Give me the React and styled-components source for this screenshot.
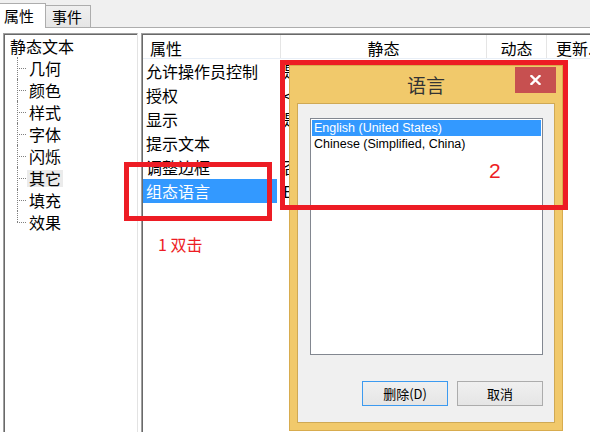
import React from 'react';
import styled, { createGlobalStyle, css } from 'styled-components';

const CJK = `"Noto Sans CJK SC", "Noto Sans", sans-serif`;
const UI = `"Liberation Sans", "Noto Sans CJK SC", sans-serif`;
const RED = '#ed1c24';
const COLS = '138px 206px 60px 1fr';

const GlobalStyle = createGlobalStyle`
  html, body {
    margin: 0;
    padding: 0;
  }
  body {
    width: 590px;
    height: 432px;
    overflow: hidden;
    background: #fff;
    font-family: ${CJK};
    color: #000;
  }
`;

const tree = [
  { label: '静态文本', children: ['几何', '颜色', '样式', '字体', '闪烁', '其它', '填充', '效果'] },
];

const rows = [
  { name: '允许操作员控制', value: '是' },
  { name: '授权', value: '<无>' },
  { name: '显示', value: '是' },
  { name: '提示文本', value: '' },
  { name: '调整边框', value: '否' },
  { name: '组态语言', value: 'English (United States)', selected: true },
];

const languages = ['English (United States)', 'Chinese (Simplified, China)'];

const App = () => {
  return (
    <Page>
      <GlobalStyle />
      <TabStrip>
        <Tab $active>属性</Tab>
        <Tab>事件</Tab>
      </TabStrip>
      <TabPage>
        <TreePanel>
          {tree.map((node) => (
            <div key={node.label}>
              <TreeRow>{node.label}</TreeRow>
              <ChildList>
                {node.children.map((child) => (
                  <ChildItem key={child}>
                    <ChildLabel $current={child === '其它'}>{child}</ChildLabel>
                  </ChildItem>
                ))}
              </ChildList>
            </div>
          ))}
        </TreePanel>
        <GridPanel>
          <HeaderRow>
            <HeaderCell>属性</HeaderCell>
            <HeaderCell $center>静态</HeaderCell>
            <HeaderCell $center>动态</HeaderCell>
            <HeaderCell $last>更新.</HeaderCell>
          </HeaderRow>
          {rows.map((row) => (
            <GridRow key={row.name}>
              <NameCell $selected={row.selected}>{row.name}</NameCell>
              <ValueCell>{row.value}</ValueCell>
              <ValueCell />
              <ValueCell />
            </GridRow>
          ))}
        </GridPanel>
      </TabPage>

      <Dialog>
        <TitleBar>
          语言
          <CloseButton>
            <svg width="11" height="10" viewBox="0 0 11 10">
              <path d="M1.5 1 L9.5 9 M9.5 1 L1.5 9" stroke="#fff" strokeWidth="2.4" strokeLinecap="square" />
            </svg>
          </CloseButton>
        </TitleBar>
        <Client>
          <ListBox>
            {languages.map((lang, index) => (
              <ListItem key={lang} $selected={index === 0}>{lang}</ListItem>
            ))}
          </ListBox>
          <ButtonRow>
            <DialogButton $default>删除(D)</DialogButton>
            <DialogButton>取消</DialogButton>
          </ButtonRow>
        </Client>
      </Dialog>

      <MarkBox $left={124} $top={162} $width={148} $height={59} />
      <MarkBox $left={280} $top={60} $width={288} $height={150} />
      <MarkLabel $left={158} $top={236} $size={16}>1 双击</MarkLabel>
      <MarkLabel $left={489} $top={160} $size={21} $latin>2</MarkLabel>
    </Page>
  );
};

export default App;

const Page = styled.div`
  position: relative;
  width: 590px;
  height: 432px;
  display: flex;
  flex-direction: column;
  overflow: hidden;
`;

const TabStrip = styled.div`
  height: 28px;
  box-sizing: border-box;
  display: flex;
  align-items: flex-end;
  background: #f0f0f0;
  border-bottom: 1px solid #adadad;
`;

const Tab = styled.div`
  box-sizing: border-box;
  font-size: 15px;
  border: 1px solid #adadad;
  border-bottom: none;
  ${(p) =>
    p.$active
      ? css`
          width: 46px;
          height: 25px;
          margin-bottom: -1px;
          background: #fff;
          border-left: none;
          padding-left: 4px;
          line-height: 23px;
          position: relative;
        `
      : css`
          width: 45px;
          height: 22px;
          background: linear-gradient(#f0f0f0, #e5e5e5);
          border-left: none;
          padding-left: 6px;
          line-height: 21px;
        `}
`;

const TabPage = styled.div`
  flex: 1;
  min-height: 0;
  display: flex;
  gap: 3px;
  padding: 5px 0 0 3px;
  background: #fff;
`;

const sunken = css`
  box-sizing: border-box;
  border-left: 1px solid #a0a0a0;
  border-top: 1px solid #a0a0a0;
  box-shadow: inset 1px 1px 0 #696969;
  background: #fff;
`;

const TreePanel = styled.div`
  ${sunken};
  width: 135px;
  border-right: 1px solid #e3e3e3;
  padding: 1px 0 0 6px;
  font-size: 16px;
  line-height: 22px;
`;

const TreeRow = styled.div`
  height: 22px;
  white-space: nowrap;
`;

const ChildList = styled.div`
  margin-left: 7px;
`;

const ChildItem = styled.div`
  position: relative;
  height: 22px;
  padding-left: 11px;
  white-space: nowrap;

  &::before {
    content: '';
    position: absolute;
    left: 0;
    top: 11px;
    width: 9px;
    border-top: 1px dotted #808080;
  }

  &::after {
    content: '';
    position: absolute;
    left: 0;
    top: 0;
    height: 100%;
    border-left: 1px dotted #808080;
  }

  &:last-child::after {
    height: 11px;
  }
`;

const ChildLabel = styled.span`
  display: inline-block;
  line-height: 17px;
  margin-left: -1px;
  padding: 0 2px;
  background: ${(p) => (p.$current ? '#ebebeb' : 'transparent')};
`;

const GridPanel = styled.div`
  ${sunken};
  flex: 1;
  min-width: 0;
  display: flex;
  flex-direction: column;
  padding-left: 1px;
  padding-top: 1px;
`;

const HeaderRow = styled.div`
  display: grid;
  grid-template-columns: ${COLS};
  height: 24px;
  box-sizing: border-box;
  border-bottom: 1px solid #e8eef6;
`;

const HeaderCell = styled.div`
  font-size: 16px;
  line-height: 20px;
  padding: 3px ${(p) => (p.$last ? '9px' : '7px')} 0;
  text-align: ${(p) => (p.$center ? 'center' : 'left')};
  border-right: ${(p) => (p.$last ? 'none' : '1px solid #e5e5e5')};
  white-space: nowrap;
`;

const GridRow = styled.div`
  display: grid;
  grid-template-columns: ${COLS};
  height: 24px;
`;

const NameCell = styled.div`
  font-size: 16px;
  line-height: 24px;
  padding-left: 3px;
  white-space: nowrap;
  overflow: hidden;
  ${(p) =>
    p.$selected &&
    css`
      background: #3399ff;
      color: #fff;
      box-shadow: inset -4px 0 0 #fff;
    `}
`;

const ValueCell = styled.div`
  font-size: 16px;
  line-height: 24px;
  padding-left: 2px;
  white-space: nowrap;
  overflow: hidden;
`;

const Dialog = styled.div`
  position: absolute;
  left: 289px;
  top: 65px;
  width: 274px;
  height: 366px;
  box-sizing: border-box;
  background: #f1c96b;
  border: 1px solid #d8ac4e;
  padding: 0 7px 7px;
  display: flex;
  flex-direction: column;
`;

const TitleBar = styled.div`
  position: relative;
  height: 37px;
  display: flex;
  align-items: center;
  justify-content: center;
  font-size: 19px;
  color: #333;
`;

const CloseButton = styled.div`
  position: absolute;
  right: -1px;
  top: 1px;
  width: 41px;
  height: 26px;
  background: #c75050;
  display: flex;
  align-items: center;
  justify-content: center;
`;

const Client = styled.div`
  flex: 1;
  background: #f0f0f0;
  border: 1px solid #cfa955;
  padding: 14px 11px 0 12px;
`;

const ListBox = styled.div`
  height: 237px;
  box-sizing: border-box;
  border: 1px solid #828790;
  background: #fff;
  padding: 1px;
`;

const ListItem = styled.div`
  height: 16px;
  line-height: 16px;
  padding-left: 2px;
  font-family: ${UI};
  font-size: 12.5px;
  white-space: nowrap;
  background: ${(p) => (p.$selected ? '#3399ff' : 'transparent')};
  color: ${(p) => (p.$selected ? '#fff' : '#000')};
`;

const ButtonRow = styled.div`
  display: flex;
  justify-content: flex-end;
  gap: 9px;
  margin-top: 26px;
`;

const DialogButton = styled.div`
  width: 86px;
  height: 25px;
  box-sizing: border-box;
  border: 1px solid ${(p) => (p.$default ? '#3c9af0' : '#acacac')};
  background: linear-gradient(#f0f0f0, #e5e5e5);
  font-size: 13px;
  line-height: 23px;
  text-align: center;
`;

const MarkBox = styled.div`
  position: absolute;
  left: ${(p) => p.$left}px;
  top: ${(p) => p.$top}px;
  width: ${(p) => p.$width}px;
  height: ${(p) => p.$height}px;
  box-sizing: border-box;
  border: 5px solid ${RED};
`;

const MarkLabel = styled.div`
  position: absolute;
  left: ${(p) => p.$left}px;
  top: ${(p) => p.$top}px;
  font-family: ${(p) => (p.$latin ? UI : CJK)};
  font-size: ${(p) => p.$size}px;
  line-height: ${(p) => p.$size}px;
  color: ${RED};
  white-space: pre;
`;
